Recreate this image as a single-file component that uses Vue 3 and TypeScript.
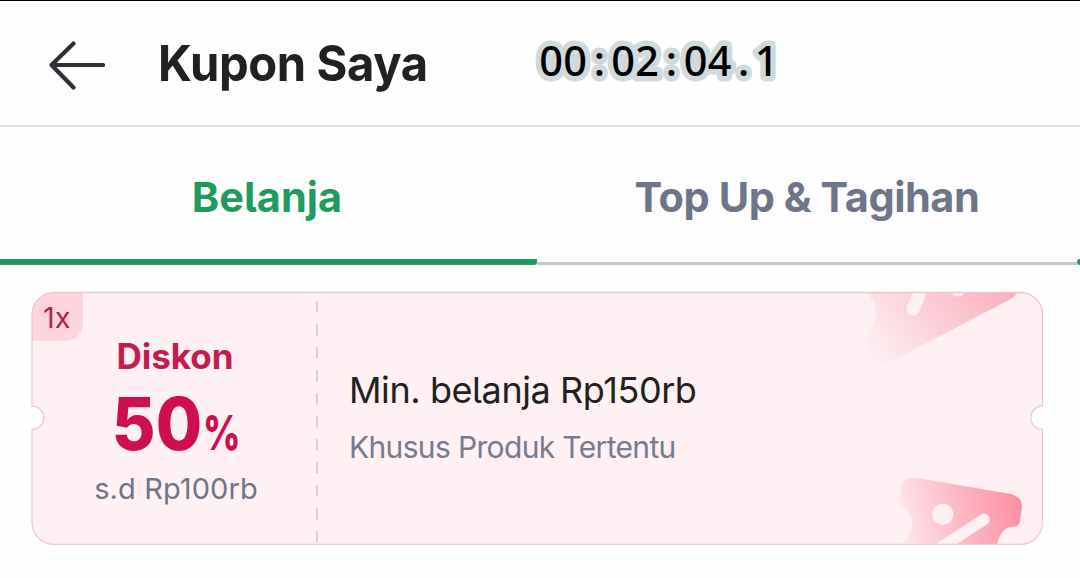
<script setup lang="ts">
const elapsed: string = '00:02:04.1'
const glyphCenters: string = '16 40.200 64.500 88 112 136.500 160.500 184.500 208.700 231.500'
const tabs: { label: string; active: boolean }[] = [
  { label: 'Belanja', active: true },
  { label: 'Top Up & Tagihan', active: false },
]
const coupon = {
  count: '1x',
  title: 'Diskon',
  amount: '50',
  cap: 's.d Rp100rb',
  minimum: 'Min. belanja Rp150rb',
  scope: 'Khusus Produk Tertentu',
}
</script>

<template>
  <main class="screen">
    <header class="header">
      <svg class="back" width="60" height="52" viewBox="0 0 60 52" fill="none">
        <path d="M28.5 4.5 6.5 26 28.5 48.5M6.5 26H58" stroke="#2e3137" stroke-width="4.200" stroke-linecap="round" stroke-linejoin="round" />
      </svg>
      <h1 class="title">Kupon Saya</h1>
      <svg class="timer" width="250" height="58" viewBox="0 0 250 58">
        <use class="halo" href="#elapsed" />
        <text id="elapsed" :x="glyphCenters" y="41">{{ elapsed }}</text>
      </svg>
    </header>

    <nav class="tabs">
      <div v-for="tab in tabs" :key="tab.label" class="tab" :class="{ active: tab.active }">
        <span class="tab-label">{{ tab.label }}</span>
      </div>
      <div class="next-tab"></div>
    </nav>

    <section class="coupon">
      <svg class="shape" width="1012" height="254" viewBox="31 291 1012 254" fill="none">
        <defs>
          <linearGradient id="ticketTop" x1="880" y1="350" x2="990" y2="270" gradientUnits="userSpaceOnUse">
            <stop offset="0" stop-color="#fdecef" />
            <stop offset="0.5" stop-color="#fcccd5" />
            <stop offset="1" stop-color="#fbb1bf" />
          </linearGradient>
          <linearGradient id="ticketBottom" x1="901" y1="525" x2="1022" y2="500" gradientUnits="userSpaceOnUse">
            <stop offset="0" stop-color="#ffe6eb" />
            <stop offset="0.45" stop-color="#fdbbc7" />
            <stop offset="1" stop-color="#fc8ea2" />
          </linearGradient>
          <clipPath id="cardClip">
            <rect x="32" y="292.500" width="1010.500" height="252" rx="22" />
          </clipPath>
        </defs>
        <path
          d="M54 292.500H1020.500A22 22 0 0 1 1042.500 314.500V406A11.700 11.700 0 0 0 1042.500 429.400V522.500A22 22 0 0 1 1020.500 544.300H54A22 22 0 0 1 32 522.500V429.400A11.700 11.700 0 0 0 32 406V314.500A22 22 0 0 1 54 292.500Z"
          fill="#fef0f3"
        />
        <g clip-path="url(#cardClip)">
          <path d="M32 292H83V321Q83 341 63 341H32Z" fill="#fdd5de" />
          <path d="M860 290Q875 296 876 312Q876.500 320 870 328Q866 334 868 343Q871 361 885 362Q890 362 895 359.500L1007 301Q1016 297 1018 290Z" fill="url(#ticketTop)" />
          <path d="M922 287 913 309" stroke="#fef0f3" stroke-width="13" stroke-linecap="round" />
          <circle cx="957.500" cy="286.500" r="10" fill="#fef0f3" />
          <path d="M897 546Q912 538 912 523Q912 511 903 507.500Q898.500 505 899.500 499L901 487Q904 477 914 477.500L1011 494Q1022 497 1022 507L1020 521Q1019 526.500 1014 526.500Q1000 527 997 546Z" fill="url(#ticketBottom)" />
          <circle cx="942.700" cy="514.300" r="10.600" fill="#fef0f3" />
          <path d="M934 552 984 519.500" stroke="#fef0f3" stroke-width="11.500" stroke-linecap="round" />
        </g>
        <path
          d="M54 292.500H1020.500A22 22 0 0 1 1042.500 314.500V406A11.700 11.700 0 0 0 1042.500 429.400V522.500A22 22 0 0 1 1020.500 544.300H54A22 22 0 0 1 32 522.500V429.400A11.700 11.700 0 0 0 32 406V314.500A22 22 0 0 1 54 292.500Z"
          stroke="#efc7cc"
          stroke-width="1.300"
        />
        <path d="M317 301V544" stroke="#e9c3cb" stroke-width="1.800" stroke-dasharray="11.500 11.500" />
      </svg>
      <div class="count">{{ coupon.count }}</div>
      <div class="value">
        <div class="diskon">{{ coupon.title }}</div>
        <div class="amount"><span class="number">{{ coupon.amount }}</span><span class="percent">%</span></div>
        <div class="cap">{{ coupon.cap }}</div>
      </div>
      <div class="terms">
        <div class="minimum">{{ coupon.minimum }}</div>
        <div class="scope">{{ coupon.scope }}</div>
      </div>
    </section>
  </main>
</template>

<style>
body {
  margin: 0;
  background: #fff;
}
</style>

<style scoped>
.screen {
  box-sizing: border-box;
  width: 1080px;
  height: 578px;
  overflow: hidden;
  background: #fefefe;
  border-top: 1px solid #000;
  font-family: Inter, "Liberation Sans", sans-serif;
  font-feature-settings: "cv05" 1;
  white-space: nowrap;
}
.header {
  box-sizing: border-box;
  display: flex;
  align-items: center;
  height: 126px;
  padding-left: 45px;
  border-bottom: 2px solid #dfe2e2;
  border-top-right-radius: 4px;
}
.back {
  margin-top: 3px;
}
.title {
  width: 377px;
  margin: 0 0 0 53px;
  font-size: 50px;
  line-height: 60px;
  font-weight: 700;
  letter-spacing: -0.4px;
  transform: scaleX(0.943);
  transform-origin: left;
  color: #212121;
}
.timer {
  overflow: visible;
  margin-top: 1px;
  font-family: "Noto Sans", sans-serif;
  font-size: 41.5px;
  font-weight: 500;
  text-anchor: middle;
}
.halo {
  stroke: #d0d9dc;
  stroke-width: 11px;
  stroke-linejoin: round;
}
.tabs {
  display: flex;
  height: 138px;
}
.tab {
  box-sizing: border-box;
  display: flex;
  justify-content: center;
  width: 537px;
  padding-top: 45px;
  font-size: 41.5px;
  line-height: 50px;
  font-weight: 700;
  letter-spacing: -0.45px;
  color: #6d7588;
  background: linear-gradient(#c3c8d2, #c3c8d2) bottom / 100% 3px no-repeat;
}
.tab:nth-child(2) {
  width: 540px;
}
.tab.active {
  padding-right: 3px;
  letter-spacing: 0;
  color: #1f9b60;
  background: linear-gradient(#1f9b60, #1f9b60) bottom / 100% 6px no-repeat;
  border-radius: 0 3px 3px 0;
}
.next-tab {
  width: 3px;
  height: 6px;
  align-self: flex-end;
  background: #1f9b60;
  border-radius: 3px 0 0 3px;
}
.coupon {
  position: relative;
  display: flex;
  width: 1012px;
  height: 254px;
  margin: 26px 0 0 31px;
}
.shape {
  position: absolute;
  inset: 0;
}
.count {
  position: absolute;
  left: 12px;
  top: 9px;
  font-size: 29px;
  line-height: 36px;
  color: #b71f56;
}
.value {
  position: relative;
  display: flex;
  flex-direction: column;
  align-items: center;
  width: 288px;
  padding-top: 44px;
}
.diskon {
  font-size: 35px;
  line-height: 42px;
  font-weight: 700;
  color: #c41b53;
}
.amount {
  display: flex;
  align-items: baseline;
  height: 94px;
  padding-right: 7px;
  line-height: 94px;
  color: #cd0f4d;
}
.number {
  font-size: 73px;
  font-weight: 800;
  transform: scaleX(0.92);
  transform-origin: right;
}
.percent {
  width: 36px;
  margin-left: 1px;
  font-size: 48px;
  font-weight: 800;
  transform: scaleX(0.76);
  transform-origin: left;
}
.cap {
  font-size: 29px;
  line-height: 36px;
  letter-spacing: 0.1px;
  margin-left: 2px;
  color: #6d7588;
}
.terms {
  position: relative;
  padding: 77px 0 0 30px;
}
.minimum {
  font-size: 36px;
  line-height: 44px;
  letter-spacing: -0.42px;
  color: #212121;
}
.scope {
  margin-top: 17px;
  font-size: 30px;
  line-height: 36px;
  letter-spacing: -0.65px;
  color: #777b90;
}
</style>
